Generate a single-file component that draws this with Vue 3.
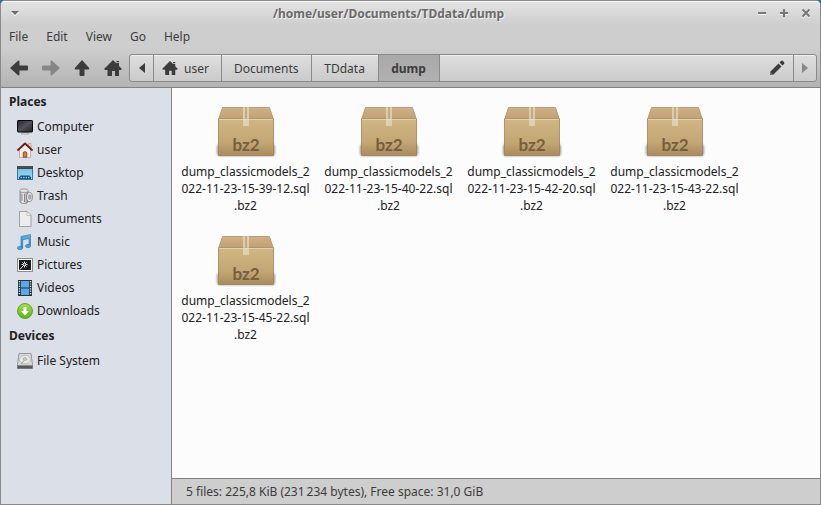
<script setup>
import { ref } from 'vue'

const path = '/home/user/Documents/TDdata/dump'
const menus = ['File', 'Edit', 'View', 'Go', 'Help']
const crumbs = ref([
  { label: 'user', icon: true },
  { label: 'Documents' },
  { label: 'TDdata' },
  { label: 'dump', current: true },
])
const groups = [
  {
    title: 'Places',
    items: [
      { label: 'Computer', icon: 'computer' },
      { label: 'user', icon: 'userhome' },
      { label: 'Desktop', icon: 'desktop' },
      { label: 'Trash', icon: 'trash' },
      { label: 'Documents', icon: 'document' },
      { label: 'Music', icon: 'music' },
      { label: 'Pictures', icon: 'pictures' },
      { label: 'Videos', icon: 'videos' },
      { label: 'Downloads', icon: 'downloads' },
    ],
  },
  { title: 'Devices', items: [{ label: 'File System', icon: 'drive' }] },
]
const files = ['39-12', '40-22', '42-20', '43-22', '45-22'].map((time) => [
  'dump_classicmodels_2',
  `022-11-23-15-${time}.sql`,
  '.bz2',
])
const status = '5 files: 225,8 KiB (231\u202f234 bytes), Free space: 31,0 GiB'
</script>

<template>
  <div class="window">
    <svg class="defs" width="0" height="0" aria-hidden="true">
      <defs>
        <linearGradient id="g-box" x1="0" y1="0" x2="0" y2="1">
          <stop offset="0" stop-color="#d0b684" /><stop offset=".65" stop-color="#c3a674" /><stop offset="1" stop-color="#a88a5d" />
        </linearGradient>
        <linearGradient id="g-lid" x1="0" y1="0" x2="0" y2="1">
          <stop offset="0" stop-color="#d0b084" /><stop offset="1" stop-color="#bf9f75" />
        </linearGradient>
        <linearGradient id="g-screen" x1="0" y1="0" x2="1" y2="1">
          <stop offset="0" stop-color="#28242e" /><stop offset=".5" stop-color="#55515c" /><stop offset="1" stop-color="#25222a" />
        </linearGradient>
        <linearGradient id="g-blue" x1="0" y1="0" x2="0" y2="1">
          <stop offset="0" stop-color="#6dbce8" /><stop offset="1" stop-color="#a5daf5" />
        </linearGradient>
        <linearGradient id="g-green" x1="0" y1="0" x2="0" y2="1">
          <stop offset="0" stop-color="#a3e04e" /><stop offset="1" stop-color="#5db01c" />
        </linearGradient>
        <linearGradient id="g-metal" x1="0" y1="0" x2="1" y2="0">
          <stop offset="0" stop-color="#a8a8ac" /><stop offset=".35" stop-color="#f2f2f3" /><stop offset="1" stop-color="#919195" />
        </linearGradient>
        <linearGradient id="g-note" x1="0" y1="0" x2="0" y2="1">
          <stop offset="0" stop-color="#62b4e6" /><stop offset="1" stop-color="#2d83bd" />
        </linearGradient>
        <filter id="f-soft" x="-20%" y="-50%" width="140%" height="200%"><feGaussianBlur stdDeviation="1.3" /></filter>
      </defs>

      <symbol id="i-back" viewBox="0 0 18 16"><path d="M0 8 8 .8Q9.500 0 9.500 2V5.500H17q1 0 1 1v3q0 1-1 1H9.500V14q0 2-1.500 1.200Z" /></symbol>
      <symbol id="i-up" viewBox="0 0 16 16"><path d="M8 0 15.200 8Q16 9.500 14 9.500H10.500V15q0 1-1 1h-3q-1 0-1-1V9.500H2Q0 9.500.8 8Z" /></symbol>
      <symbol id="i-home" viewBox="0 0 18 16"><path d="M9 0 12.500 3.500V3h2.500V6L18 9l-1 1H15v6H11v-5H8v5H3.500v-6H1L0 9ZM12.500 1h2.500v1.300H12.500Z" /></symbol>
      <symbol id="i-pencil" viewBox="0 0 16 16"><path d="M1 15 1.500 11.500 9.500 3.500 12.500 6.500 4.500 14.500ZM10.500 2.500 12 1q1-1 2 0l1 1q1 1 0 2l-1.500 1.500Z" /><path d="m1.700 13 1.300 1.300-1.300.2Z" fill="#ccc" /></symbol>

      <symbol id="i-computer" viewBox="0 0 16 16">
        <path d="M5 13.500h6l1 1.500H4Z" fill="#e8e8ea" stroke="#8b8c92" stroke-width=".7" />
        <rect x=".5" y="1.500" width="15" height="11.500" rx=".6" fill="url(#g-screen)" stroke="#08070a" />
      </symbol>
      <symbol id="i-userhome" viewBox="0 0 16 16">
        <path d="M11.500 1.500h2.500V6l-2.500-2Z" fill="#ead4c0" stroke="#a8937f" stroke-width=".6" />
        <path d="M2.500 7 8 2l5.500 5v8.500h-11Z" fill="#faeee4" stroke="#c29d84" stroke-width=".8" />
        <path d="M6.200 15.200V11Q6.200 9.700 8 9.700T9.800 11v4.200Z" fill="#c98348" stroke="#75411c" stroke-width=".8" />
        <path d="M1 8 8 1.500 15 8" fill="none" stroke="#6b1b20" stroke-width="1.800" stroke-linecap="round" stroke-linejoin="round" />
      </symbol>
      <symbol id="i-desktop" viewBox="0 0 16 16">
        <rect x=".5" y="1.500" width="15" height="13" fill="url(#g-blue)" stroke="#317ba5" />
        <path d="M0 1h16v3H0Z" fill="#404347" /><path d="M1 2h14" stroke="#696c70" stroke-width=".6" />
        <path d="M2 14v-1.500l1.500-2h9l1.500 2V14Z" fill="#164761" />
        <path d="M3.500 12.500h1.500M6 12.500h1.500M8.500 12.500H10M11 12.500h1.500" stroke="#7bd5ff" stroke-width="1.500" />
      </symbol>
      <symbol id="i-trash" viewBox="0 0 16 16">
        <path d="M3 3v10.500Q3 15.500 7 15.500T11 13.500V3Z" fill="url(#g-metal)" stroke="#77777c" stroke-width=".7" />
        <ellipse cx="7" cy="2.800" rx="4.300" ry="2" fill="#dedee0" stroke="#85858a" stroke-width=".7" />
        <path d="M5 6v7M7.500 6v8" stroke="#808086" stroke-width=".9" />
        <ellipse cx="12.500" cy="9" rx="2.900" ry="4.600" fill="#e6e6e8" stroke="#7b7b80" stroke-width=".8" />
        <ellipse cx="12.800" cy="9" rx="1.200" ry="2.300" fill="#bbbcc0" stroke="#77777c" stroke-width=".6" />
      </symbol>
      <symbol id="i-document" viewBox="0 0 16 16">
        <path d="M2.500.5h7.500L14 4.500v11H2.500Z" fill="#ececec" stroke="#999" stroke-width=".9" />
        <path d="M10 .5V4.500h4Z" fill="#fff" stroke="#aaa" stroke-width=".7" />
      </symbol>
      <symbol id="i-music" viewBox="0 0 16 16">
        <path d="M4 2.500 13.500.5V11.500h-1.500V4.500L5.700 5.800V14H4Z" fill="url(#g-note)" stroke="#2477ab" stroke-width=".6" />
        <ellipse cx="3" cy="14" rx="2.600" ry="1.700" fill="#4ca2d6" stroke="#2477ab" stroke-width=".6" />
        <ellipse cx="11" cy="12" rx="2.600" ry="1.700" fill="#4ca2d6" stroke="#2477ab" stroke-width=".6" />
      </symbol>
      <symbol id="i-pictures" viewBox="0 0 16 16">
        <rect x=".5" y="1.500" width="15" height="13" fill="#f8f8f8" stroke="#8c8c8c" />
        <rect x="2" y="3" width="12" height="10" fill="#1b1b1d" />
        <path d="M7.500 4.500v6M4.500 7.500h6M5.400 5.400l4.200 4.200M9.600 5.400 5.400 9.600M6 9l-3 3.500" stroke="#e8e8e8" />
        <circle cx="7.500" cy="7.500" r="1" fill="#333" />
      </symbol>
      <symbol id="i-videos" viewBox="0 0 16 16">
        <rect x="1" y="0" width="14" height="16" fill="#25313b" />
        <path d="M4 1h8v6.500H4ZM4 8.500h8V15H4Z" fill="#55a9ef" />
        <path d="M2.500 1v14M13.500 1v14" stroke="#eee" stroke-width="1.400" stroke-dasharray="1.200 1.200" />
      </symbol>
      <symbol id="i-downloads" viewBox="0 0 16 16">
        <circle cx="8" cy="8" r="7.500" fill="url(#g-green)" stroke="#5a9e21" stroke-width=".9" />
        <path d="M6.500 4h3v4H12l-4 4.500L4 8h2.500Z" fill="#fff" />
      </symbol>
      <symbol id="i-drive" viewBox="0 0 16 16">
        <path d="M2 .5h12l1.500 11v4H.5v-4Z" fill="#dadada" stroke="#858585" stroke-width=".8" />
        <path d="M.5 12h15v3.500H.5Z" fill="#56585a" /><path d="M1 12.300h14" stroke="#aaa" stroke-width=".8" />
        <ellipse cx="8" cy="6.500" rx="5.500" ry="4.300" fill="#e9e9e9" stroke="#aaa" stroke-width=".7" />
        <ellipse cx="8" cy="6" rx="2" ry="1.400" fill="#ccc" stroke="#999" stroke-width=".6" />
        <path d="m4 11 3-3.500" stroke="#999" />
      </symbol>
    </svg>

    <header class="chrome">
      <div class="titlebar">
        <button class="tb" aria-label="Window menu"><svg width="10" height="8" viewBox="0 0 10 8"><path d="M1 3 5 7 9 3Z" fill="#fff" /><path d="M1 2h8L5 6Z" fill="#6b6b6b" /></svg></button>
        <h1>{{ path }}</h1>
        <div class="controls">
          <button class="tb" aria-label="Minimize"><svg width="10" height="10"><path d="M1 6.500h8" stroke="#f4f4f4" /><path d="M1 5h8" stroke="#777" stroke-width="2" /></svg></button>
          <button class="tb" aria-label="Maximize"><svg width="10" height="10"><path d="M1 6.500h8" stroke="#f4f4f4" /><path d="M1 5h8M5 1v8" stroke="#777" stroke-width="2" /></svg></button>
          <button class="tb" aria-label="Close"><svg width="10" height="10"><path d="m1.500 2.500 7 7m0-7-7 7" stroke="#f4f4f4" stroke-width="2" /><path d="m1.500 1.500 7 7m0-7-7 7" stroke="#777" stroke-width="2" /></svg></button>
        </div>
      </div>
      <nav class="menubar" aria-label="Menu">
        <button v-for="m in menus" :key="m">{{ m }}</button>
      </nav>
      <div class="toolbar">
        <div class="tools">
          <button aria-label="Back"><svg width="18" height="16"><use href="#i-back" /></svg></button>
          <button aria-label="Forward" disabled><svg class="flip" width="18" height="16"><use href="#i-back" /></svg></button>
          <button aria-label="Up"><svg width="16" height="16"><use href="#i-up" /></svg></button>
          <button aria-label="Home"><svg width="18" height="16"><use href="#i-home" /></svg></button>
        </div>
        <nav class="pathbar" aria-label="Location">
          <button class="scroll" aria-label="Scroll left"><svg width="6" height="10"><path d="M6 0v10L0 5Z" /></svg></button>
          <button v-for="c in crumbs" :key="c.label" class="crumb" :class="{ current: c.current }">
            <svg v-if="c.icon" width="16" height="14"><use href="#i-home" /></svg>{{ c.label }}
          </button>
          <button class="edit" aria-label="Edit location"><svg width="16" height="16"><use href="#i-pencil" /></svg></button>
          <button class="scroll end" aria-label="Scroll right" disabled><svg width="6" height="10"><path d="M0 0v10L6 5Z" /></svg></button>
        </nav>
      </div>
    </header>

    <div class="body">
      <aside class="sidebar">
        <section v-for="g in groups" :key="g.title">
          <h2>{{ g.title }}</h2>
          <ul>
            <li v-for="i in g.items" :key="i.label">
              <a href="#"><svg width="16" height="16"><use :href="'#i-' + i.icon" /></svg>{{ i.label }}</a>
            </li>
          </ul>
        </section>
      </aside>
      <main class="content">
        <div class="files">
          <button v-for="f in files" :key="f[1]" class="file">
            <svg width="64" height="56" viewBox="0 0 64 56">
              <rect x="3" y="40" width="58" height="12" rx="3" opacity=".4" filter="url(#f-soft)" />
              <path d="M8.500 3.500h47l4 12h-55Z" fill="url(#g-lid)" stroke="#b0916a" stroke-width=".8" />
              <path d="M4.500 15h55V51.500h-55Z" fill="url(#g-box)" stroke="#9f8156" stroke-width=".8" />
              <path d="M5 15.500h54" stroke="#e5d1a8" />
              <path d="M29 3h6v19h-6Z" fill="#efe2cf" opacity=".6" />
              <path d="M32 3v12" stroke="#a78962" />
              <text x="32" y="47" text-anchor="middle" class="kind">bz2</text>
            </svg>
            <span v-for="line in f" :key="line">{{ line }}</span>
          </button>
        </div>
        <footer>{{ status }}</footer>
      </main>
    </div>
  </div>
</template>

<style>
body {
  margin: 0;
  background: #1f72ad;
}
</style>

<style scoped>
.window {
  box-sizing: border-box;
  min-height: 100vh;
  display: flex;
  flex-direction: column;
  border: 1px solid #8a8a8a;
  border-radius: 5px 5px 0 0;
  overflow: hidden;
  background: #cecece;
  font: 12px/17px "Noto Sans", sans-serif;
  color: #3c3c3c;
}
.defs {
  position: absolute;
}
button {
  display: flex;
  align-items: center;
  justify-content: center;
  margin: 0;
  padding: 0;
  border: 0;
  background: none;
  color: inherit;
  font: inherit;
}
svg {
  flex: none;
  display: block;
}
.chrome {
  border-bottom: 1px solid #828282;
  background: linear-gradient(#e4e4e4, #cecece 24px, #cecece 46px, #b3b3b3);
  box-shadow: inset 0 1px #fafafa;
}
.titlebar {
  display: flex;
  align-items: center;
  height: 24px;
  padding: 0 9px;
}
.titlebar h1 {
  flex: 1;
  margin: 0;
  text-align: center;
  font-size: 12px;
  font-weight: 700;
  color: #6b6b6b;
  text-shadow: 1px 1px #f0f0f0;
}
.tb {
  width: 10px;
  height: 16px;
}
.controls {
  display: flex;
  justify-content: flex-end;
  gap: 12px;
}
.menubar {
  display: flex;
  gap: 18px;
  height: 24px;
  padding: 0 8px;
}
.menubar button {
  height: 23px;
}
.toolbar {
  display: flex;
  align-items: center;
  height: 38px;
  padding: 0 3px 0 9px;
}
.tools {
  display: flex;
  gap: 14px;
  padding-right: 7px;
  fill: #3c3c3c;
}
.tools button:disabled {
  fill: #868686;
}
.flip {
  transform: scaleX(-1);
}
.pathbar {
  flex: 1;
  display: flex;
  box-sizing: border-box;
  height: 28px;
  border: 1px solid #8a8a8a;
  border-radius: 3px;
  background: linear-gradient(#dedede, #cbcbcb);
  box-shadow: inset 0 1px #efefef;
  fill: #3c3c3c;
}
.scroll {
  width: 23px;
}
.crumb {
  gap: 6px;
  min-width: 67px;
  padding: 0 12px;
  border-left: 1px solid #8a8a8a;
}
.crumb:nth-child(2) {
  padding-left: 8px;
}
.current {
  min-width: 62px;
  border-right: 1px solid #8a8a8a;
  background: linear-gradient(#a9a9a9, #b1b1b1);
  font-weight: 700;
}
.edit {
  margin-left: auto;
  padding: 0 8px;
}
.end {
  border-left: 1px solid #8a8a8a;
  fill: #868686;
}
.body {
  flex: 1;
  display: flex;
}
.sidebar {
  flex: none;
  width: 170px;
  border-right: 1px solid #828282;
  background: #dbdfe7;
  color: #212121;
}
.sidebar h2 {
  margin: 0;
  padding-left: 8px;
  font-size: 12px;
  line-height: 27px;
}
.sidebar ul {
  margin: 0;
  padding: 0;
  list-style: none;
}
.sidebar a {
  display: flex;
  align-items: center;
  gap: 4px;
  height: 23px;
  padding-left: 16px;
  color: inherit;
  text-decoration: none;
}
.content {
  flex: 1;
  min-width: 0;
  display: flex;
  flex-direction: column;
  background: #fcfcfc;
}
.files {
  flex: 1;
  display: grid;
  grid-template-columns: repeat(auto-fill, 131px);
  align-content: start;
  gap: 10px 12px;
  padding: 16px 8px;
}
.file {
  flex-direction: column;
  height: 119px;
  justify-content: flex-start;
  color: #212121;
  white-space: nowrap;
}
.file svg {
  margin-bottom: 3px;
}
.kind {
  font: 700 17px Lato, sans-serif;
  fill: #76603c;
}
footer {
  height: 25px;
  padding-left: 14px;
  border-top: 1px solid #828282;
  background: #cecece;
  line-height: 25px;
}
</style>
